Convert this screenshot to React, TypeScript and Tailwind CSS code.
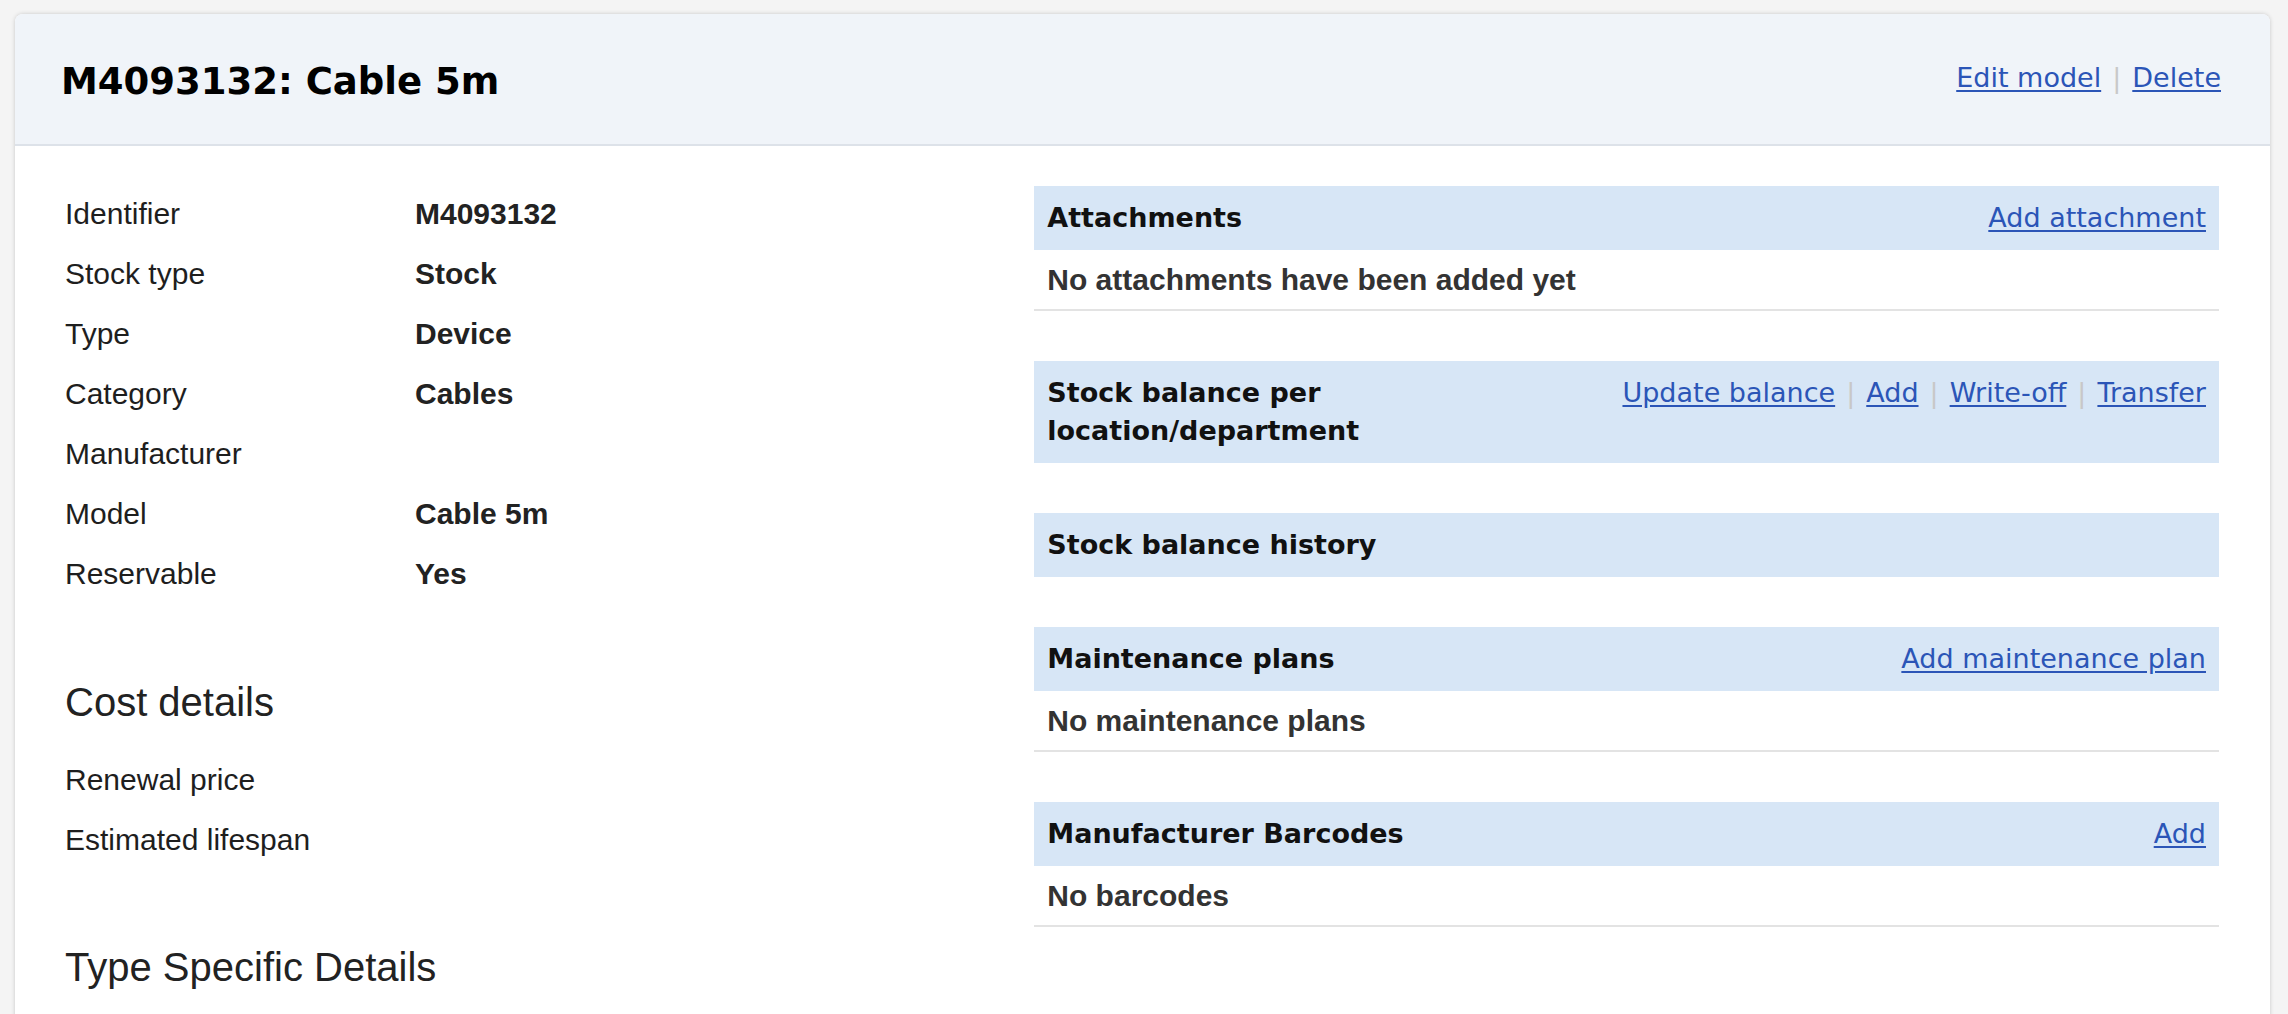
import React from "react";

const head = { fontFamily: '"DejaVu Sans", Verdana, sans-serif' };
const body = { fontFamily: '"Liberation Sans", Arial, Helvetica, sans-serif' };

function Sep() {
  return <span className="mx-[11px] text-[#c8c8c8]">|</span>;
}

function Link({ children }: { children: React.ReactNode }) {
  return (
    <a href="#" className="text-[#2b55b7] underline underline-offset-[3px]">
      {children}
    </a>
  );
}

function Section({
  title,
  links,
  content,
}: {
  title: string;
  links?: string[];
  content?: string;
}) {
  return (
    <div className="mb-[50px]">
      <div className="flex items-start justify-between gap-6 bg-[#d7e6f6] px-[13px] py-[13px] leading-[38px]">
        <div className="flex-1 text-[27px] font-bold text-[#111]" style={head}>
          {title}
        </div>
        {links && (
          <div className="shrink-0 text-[27px]" style={head}>
            {links.map((l, i) => (
              <React.Fragment key={l}>
                {i > 0 && <Sep />}
                <Link>{l}</Link>
              </React.Fragment>
            ))}
          </div>
        )}
      </div>
      {content && (
        <div
          className="flex h-[61px] items-center border-b-2 border-[#e3e3e3] px-[13px] text-[30px] font-bold text-[#333]"
          style={body}
        >
          {content}
        </div>
      )}
    </div>
  );
}

function Row({ label, value }: { label: string; value?: string }) {
  return (
    <div className="flex h-[60px] items-center text-[30px] text-[#1e1e1e]" style={body}>
      <div className="w-[350px] shrink-0">{label}</div>
      <div className="font-bold text-[#222]">{value}</div>
    </div>
  );
}

export default function App() {
  return (
    <div className="h-[1014px] overflow-hidden bg-[#f4f4f4] pl-[15px] pr-[18px] pt-[14px]">
      <div className="min-h-[1100px] rounded-[8px] bg-white shadow-[0_0_4px_rgba(0,0,0,0.18)]">
        <div className="flex h-[132px] items-center justify-between rounded-t-[8px] border-b-2 border-[#dde2e9] bg-[#f0f4f9] pl-[46px] pr-[49px]">
          <h1 className="pt-[6px] text-[37px] font-bold text-black" style={head}>
            M4093132: Cable 5m
          </h1>
          <div className="pb-[2px] text-[27px]" style={head}>
            <Link>Edit model</Link>
            <Sep />
            <Link>Delete</Link>
          </div>
        </div>
        <div className="flex pl-[50px] pr-[51px] pt-[40px]">
          <div className="w-[45%] -mt-[3px]">
            <Row label="Identifier" value="M4093132" />
            <Row label="Stock type" value="Stock" />
            <Row label="Type" value="Device" />
            <Row label="Category" value="Cables" />
            <Row label="Manufacturer" />
            <Row label="Model" value="Cable 5m" />
            <Row label="Reservable" value="Yes" />
            <h2 className="mt-[75px] mb-[23px] h-[48px] text-[40px] leading-[48px] text-[#222]" style={body}>
              Cost details
            </h2>
            <Row label="Renewal price" />
            <Row label="Estimated lifespan" />
            <h2 className="mt-[74px] h-[48px] text-[40px] leading-[48px] text-[#222]" style={body}>
              Type Specific Details
            </h2>
          </div>
          <div className="w-[55%]">
            <Section
              title="Attachments"
              links={["Add attachment"]}
              content="No attachments have been added yet"
            />
            <Section
              title="Stock balance per location/department"
              links={["Update balance", "Add", "Write-off", "Transfer"]}
            />
            <Section title="Stock balance history" />
            <Section
              title="Maintenance plans"
              links={["Add maintenance plan"]}
              content="No maintenance plans"
            />
            <Section title="Manufacturer Barcodes" links={["Add"]} content="No barcodes" />
          </div>
        </div>
      </div>
    </div>
  );
}
